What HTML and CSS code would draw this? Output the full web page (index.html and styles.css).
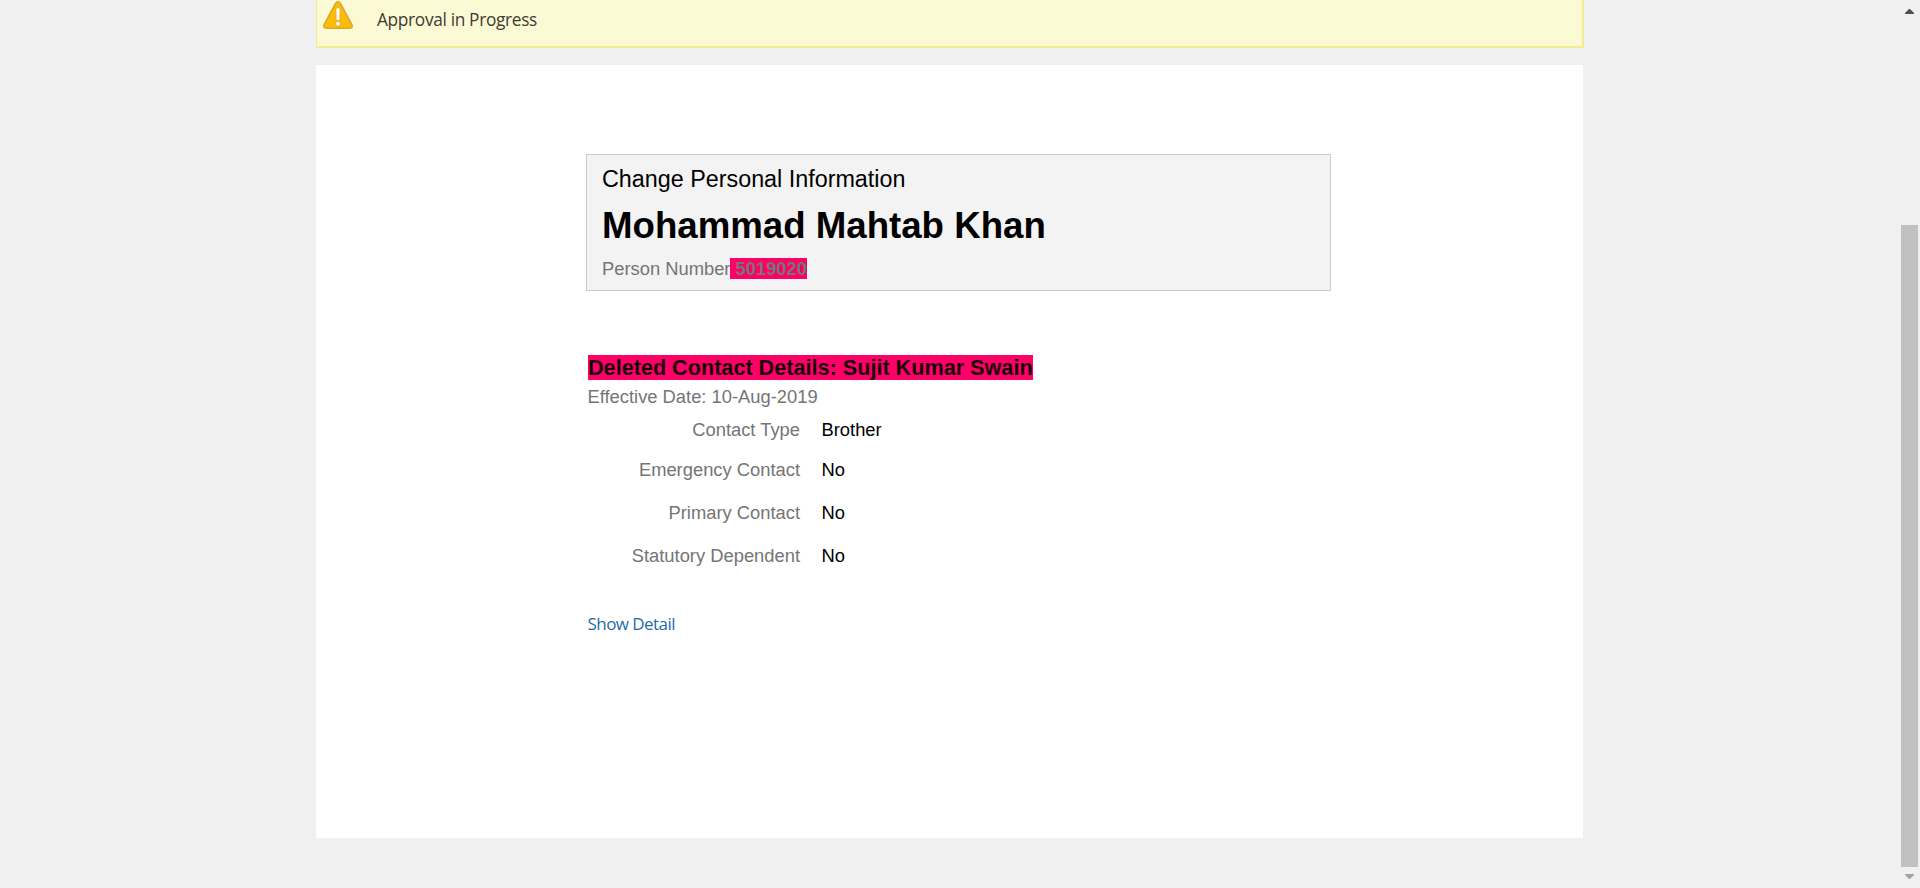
FILE: index.html
```html
<!DOCTYPE html>
<html lang="en">
<head>
<meta charset="utf-8">
<title>Approval in Progress</title>
<link rel="stylesheet" href="styles.css">
</head>
<body>
<div class="page">
  <main class="content">
    <div class="banner">
      <svg class="warning" viewBox="0 0 30 28" width="30" height="28" aria-hidden="true">
        <path d="M12.4 2.6Q15 -.8 17.5 2.6L28.8 23.6Q30.2 27 26.8 27.2H3.2Q-.2 27 1.2 23.6Z" fill="#fabd0b" stroke="#e0a526" stroke-width="1.6"/>
        <path d="M12.9 7.4Q15 5.8 17.1 7.4L16.8 19.4H13.2Z" fill="#fffdf4" stroke="#dba11a" stroke-width=".7"/>
        <circle cx="15" cy="22.8" r="2.3" fill="#fffdf4" stroke="#dba11a" stroke-width=".6"/>
      </svg>
      <span class="banner-text">Approval in Progress</span>
    </div>
    <section class="panel">
      <header class="card">
        <div class="task">Change Personal Information</div>
        <h1 class="name">Mohammad Mahtab Khan</h1>
        <div class="person">Person Number<b class="mark"> 5019020</b></div>
      </header>
      <div class="details">
        <h2 class="heading"><span class="mark">Deleted Contact Details: Sujit Kumar Swain</span></h2>
        <div class="date">Effective Date: 10-Aug-2019</div>
        <dl class="fields">
          <dt>Contact Type</dt><dd>Brother</dd>
          <dt>Emergency Contact</dt><dd>No</dd>
          <dt>Primary Contact</dt><dd>No</dd>
          <dt>Statutory Dependent</dt><dd>No</dd>
        </dl>
        <a class="link">Show Detail</a>
      </div>
    </section>
  </main>
  <aside class="scrollbar">
    <svg class="arrow-up" width="9" height="5" viewBox="0 0 9 5"><path d="M0 5V4L4 0H5L9 4V5Z" fill="#505050"/></svg>
    <div class="thumb"></div>
    <svg class="arrow-down" width="9" height="5" viewBox="0 0 9 5"><path d="M0 0V1L4 5H5L9 1V0Z" fill="#a3a3a3"/></svg>
  </aside>
</div>
</body>
</html>
```

FILE: styles.css
```css
* { box-sizing: border-box; }

body {
  margin: 0;
  background: #f0f0f0;
  font-family: "Liberation Sans", Arial, sans-serif;
  font-size: 18.35px;
  color: #000;
}

.page {
  display: flex;
  justify-content: space-between;
  height: 888px;
  padding-left: 316px;
  overflow: hidden;
}

.content { width: 1268px; }

.banner {
  display: flex;
  align-items: flex-start;
  height: 48px;
  padding: 1px 0 0 6px;
  background: #fcfad4;
  border: 2px solid #f1eb91;
  border-top: 0;
  border-left-width: 1px;
}

.warning { flex: none; margin-right: 24px; }

.banner-text {
  font-family: "Open Sans", sans-serif;
  font-size: 17.3px;
  line-height: 37px;
  letter-spacing: -0.33px;
  color: #3c3c35;
}

.panel {
  width: 1267px;
  height: 773px;
  margin-top: 17px;
  padding: 89px 0 0 270px;
  background: #fff;
}

.card {
  width: 745px;
  height: 137px;
  padding: 8px 0 0 15px;
  background: #f3f3f3;
  border: 1px solid #cbcbcb;
}

.task { font-size: 23.33px; line-height: 32px; }

.name {
  margin: 7px 0 0;
  font-size: 36.65px;
  line-height: 48px;
}

.person { margin-top: 6px; line-height: 26px; color: #757575; }

.mark { background: #ff0066; }

.details { padding: 62px 0 0 1px; }

.heading {
  margin: 0;
  padding-left: 1px;
  font-size: 21.64px;
  line-height: 30px;
}

.heading .mark { color: #17000a; }

.date { margin-top: 1px; padding-left: 0.5px; line-height: 26px; color: #757575; }

.fields {
  display: grid;
  grid-template-columns: 213px auto;
  grid-template-rows: 40px 43px 43px 43px;
  column-gap: 21.5px;
  margin: 7px 0 0;
  line-height: 26px;
}

.fields dt { text-align: right; color: #757575; }

.fields dd { margin: 0; }

.link {
  display: block;
  width: max-content;
  margin-top: 25px;
  padding-left: 0.5px;
  font-family: "Open Sans", sans-serif;
  font-size: 17px;
  line-height: 26px;
  letter-spacing: -0.55px;
  color: #1f6ba6;
}

.scrollbar {
  display: flex;
  flex-direction: column;
  align-items: center;
  width: 17px;
  margin-right: 2px;
  padding-top: 9px;
}

.thumb {
  width: 17px;
  height: 642px;
  margin: 211px 0 7px;
  background: #c1c1c1;
}
```
